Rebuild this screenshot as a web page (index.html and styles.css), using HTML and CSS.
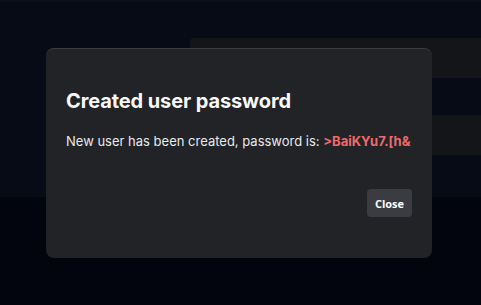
FILE: index.html
```html
<!DOCTYPE html>
<html>
<head>
<meta charset="utf-8">
<link rel="stylesheet" href="styles.css">
</head>
<body>
<div class="page">
  <div class="topbar"></div>
  <div class="hero">
    <div class="rows">
      <div class="row"></div>
      <div class="row"></div>
    </div>
  </div>
  <div class="rest"></div>
</div>
<div class="overlay">
  <div class="modal">
    <h2 class="title">Created user password</h2>
    <p class="msg">New user has been created, password is: <span class="pw">&gt;BaiKYu7.[h&amp;</span></p>
    <div class="actions">
      <button class="btn">Close</button>
    </div>
  </div>
</div>
</body>
</html>
```
FILE: styles.css
```css
* { box-sizing: border-box; }
html, body { margin: 0; padding: 0; }
body {
  width: 481px;
  height: 305px;
  overflow: hidden;
  background: #02050e;
  font-family: Inter, "Liberation Sans", sans-serif;
  position: relative;
}
.page { display: flex; flex-direction: column; height: 305px; }
.topbar { height: 2px; background: #0b0f18; }
.hero {
  height: 195px;
  background: #070b15;
  padding-top: 36px;
  padding-left: 190px;
}
.rows { display: flex; flex-direction: column; gap: 37px; }
.row {
  height: 40px;
  background: #131518;
  border-radius: 4px 0 0 4px;
}
.rest { flex: 1; }
.overlay {
  position: absolute;
  left: 46px;
  top: 48px;
}
.modal {
  width: 386px;
  height: 210px;
  background: #212327;
  border-radius: 8px;
  border-top: 1px solid #3b3d41;
  padding: 40px 20px 0 20px;
  display: flex;
  flex-direction: column;
}
.title {
  margin: 0;
  color: #f8f8f8;
  font-size: 20px;
  font-weight: 700;
  line-height: 24px;
  letter-spacing: -0.1px;
}
.msg {
  margin: 19px 0 0 0;
  color: #e8e9ea;
  font-size: 13px;
  line-height: 18px;
}
.pw {
  color: #f06a6c;
  font-weight: 700;
}
.actions {
  display: flex;
  justify-content: flex-end;
  margin-top: 39px;
}
.btn {
  width: 45px;
  height: 28px;
  border: 0;
  border-radius: 4px;
  background: #3a3c41;
  color: #ffffff;
  font-family: "Open Sans", "Liberation Sans", sans-serif;
  font-weight: 700;
  font-size: 11px;
  padding: 0;
}
```
